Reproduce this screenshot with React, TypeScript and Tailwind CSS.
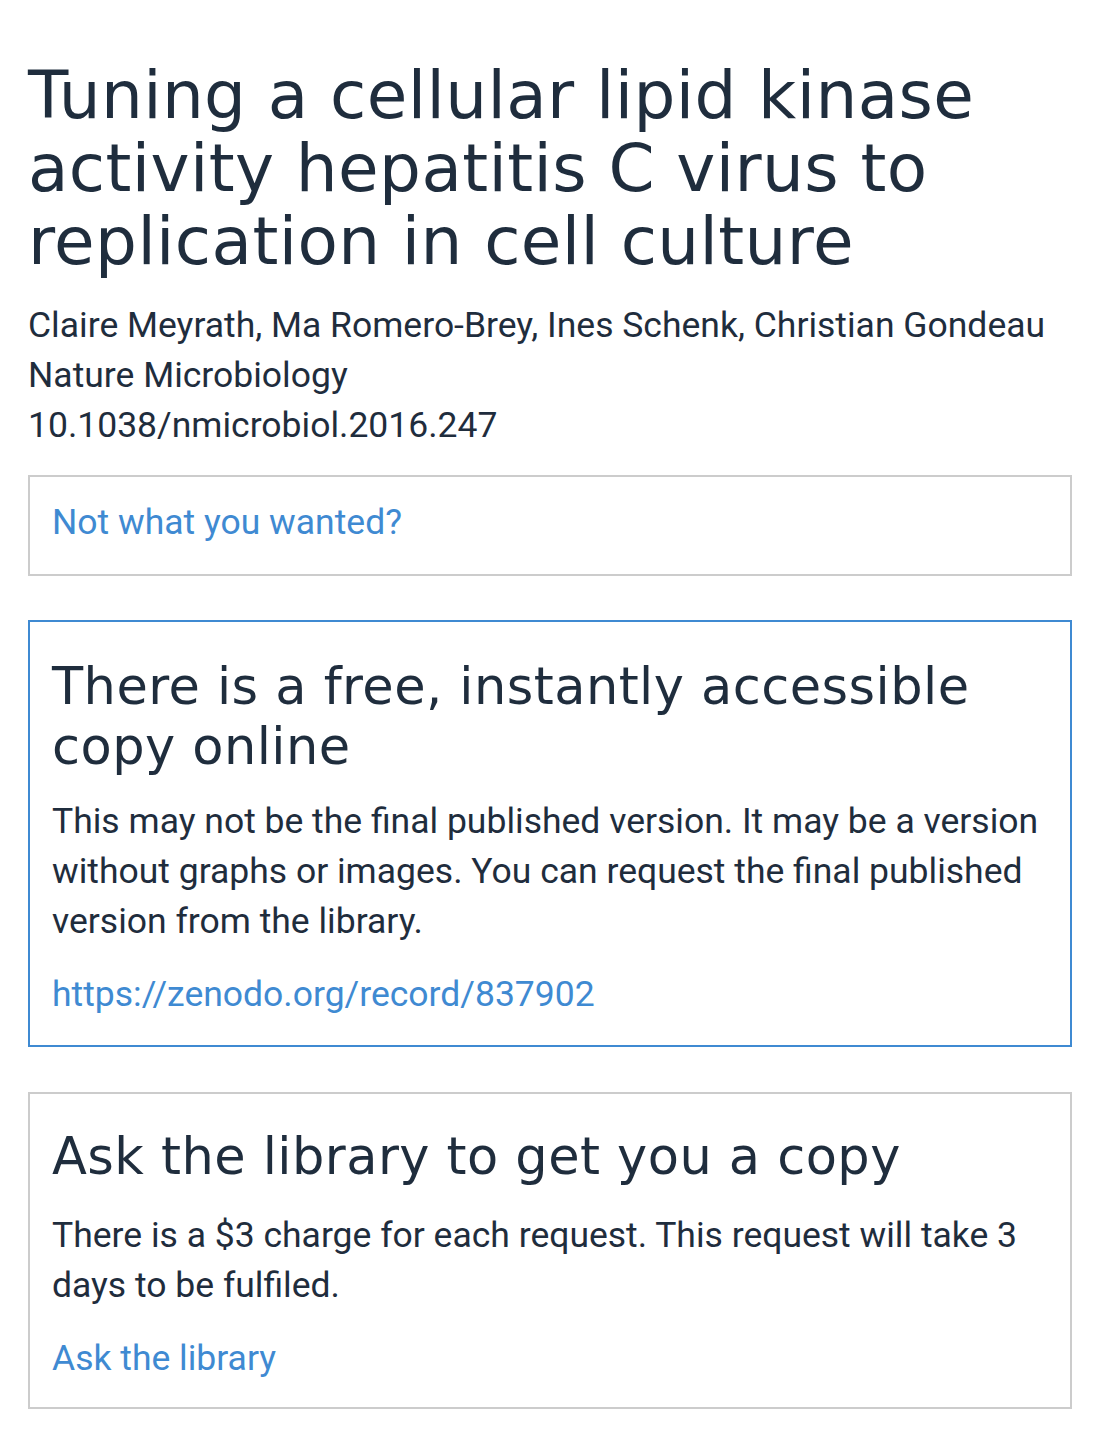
import React from "react";

const heading = { fontFamily: '"DejaVu Sans", sans-serif' };
const body = { fontFamily: 'Roboto, "Liberation Sans", sans-serif' };

export default function App() {
  return (
    <div className="min-h-screen bg-white pl-[28px] pr-[26px] pt-[59px] pb-10 text-[#1f2d3d]" style={body}>
      <h1 className="text-[66px] leading-[73px] font-normal tracking-[0.4px]" style={heading}>
        Tuning a cellular lipid kinase activity hepatitis C virus to replication in cell culture
      </h1>
      <div className="mt-[22px] text-[35.5px] leading-[50px]">
        <p>Claire Meyrath, Ma Romero-Brey, Ines Schenk, Christian Gondeau</p>
        <p>Nature Microbiology</p>
        <p>10.1038/nmicrobiol.2016.247</p>
      </div>

      <div className="mt-[25px] border-2 border-[#cccccc] px-[22px] pt-[20px] pb-[27px]">
        <a href="#" className="block text-[35.5px] leading-[50px] text-[#3f8ad2]">
          Not what you wanted?
        </a>
      </div>

      <div className="mt-[44px] border-2 border-[#3f8ad2] px-[22px] pt-[35px] pb-[26px]">
        <h2 className="text-[51px] leading-[60px] font-normal tracking-[0.45px]" style={heading}>
          There is a free, instantly accessible copy online
        </h2>
        <p className="mt-[19px] text-[35.5px] leading-[50px]">
          This may not be the final published version. It may be a version without graphs or images. You can request the final published version from the library.
        </p>
        <a href="#" className="mt-[23px] block text-[35.5px] leading-[50px] text-[#3f8ad2]">
          https://zenodo.org/record/837902
        </a>
      </div>

      <div className="mt-[45px] border-2 border-[#cccccc] px-[22px] pt-[33px] pb-[24px]">
        <h2 className="text-[51px] leading-[60px] font-normal tracking-[0.45px]" style={heading}>
          Ask the library to get you a copy
        </h2>
        <p className="mt-[23px] text-[35.5px] leading-[50px]">
          There is a $3 charge for each request. This request will take 3 days to be fulfiled.
        </p>
        <a href="#" className="mt-[23px] block text-[35.5px] leading-[50px] text-[#3f8ad2]">
          Ask the library
        </a>
      </div>
    </div>
  );
}
